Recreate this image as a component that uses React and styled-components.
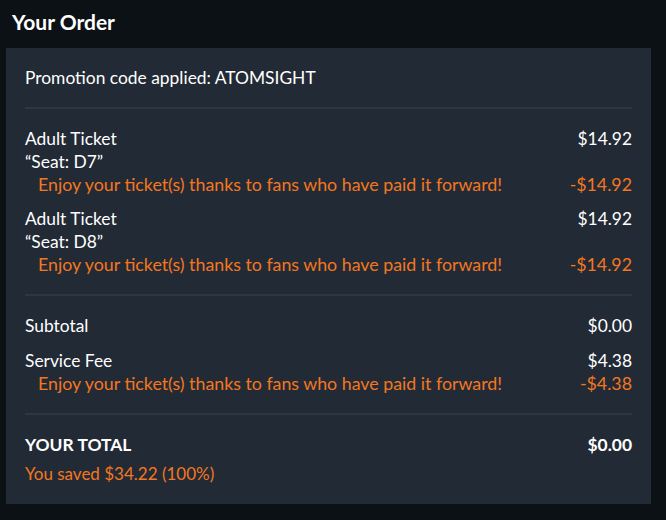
import React from "react";
import styled, { createGlobalStyle } from "styled-components";

const GlobalStyle = createGlobalStyle`
  body {
    margin: 0;
    background: #0c1116;
    font-family: "Lato", "Noto Sans", sans-serif;
    color: #fff;
  }
`;

const Page = styled.div`
  width: 666px;
  height: 520px;
  box-sizing: border-box;
  padding: 0 15px 0 6px;
`;

const Title = styled.h2`
  margin: 0;
  padding: 10px 6px 0;
  height: 48px;
  box-sizing: border-box;
  font-size: 21px;
  font-weight: 700;
  line-height: 24px;
`;

const Panel = styled.div`
  background: #222a35;
  padding: 0 19px;
`;

const Section = styled.div`
  padding: 18px 0 18px;
  display: flex;
  flex-direction: column;
  gap: ${(p) => p.$gap || 0}px;
  & + & {
    border-top: 2px solid #2b3746;
  }
  &:last-child {
    padding-bottom: 19px;
  }
`;

const Line = styled.div`
  display: flex;
  justify-content: space-between;
  font-size: 17.4px;
  line-height: 23px;
  font-weight: ${(p) => (p.$bold ? 700 : 400)};
`;

const Discount = styled(Line)`
  color: #f47720;
  font-size: ${(p) => (p.$indent ? 17.8 : 17)}px;
  padding-left: ${(p) => (p.$indent ? 13 : 0)}px;
`;

const Item = styled.div``;

const perk = "Enjoy your ticket(s) thanks to fans who have paid it forward!";

const items = [
  { name: "Adult Ticket", seat: "D7", price: "$14.92" },
  { name: "Adult Ticket", seat: "D8", price: "$14.92" },
];

export default function App() {
  return (
    <Page>
      <GlobalStyle />
      <Title>Your Order</Title>
      <Panel>
        <Section>
          <Line>Promotion code applied: ATOMSIGHT</Line>
        </Section>
        <Section $gap={11}>
          {items.map((it) => (
            <Item key={it.seat}>
              <Line>
                <span>{it.name}</span>
                <span>{it.price}</span>
              </Line>
              <Line>“Seat: {it.seat}”</Line>
              <Discount $indent>
                <span>{perk}</span>
                <span>-{it.price}</span>
              </Discount>
            </Item>
          ))}
        </Section>
        <Section $gap={12}>
          <Line>
            <span>Subtotal</span>
            <span>$0.00</span>
          </Line>
          <Item>
            <Line>
              <span>Service Fee</span>
              <span>$4.38</span>
            </Line>
            <Discount $indent>
              <span>{perk}</span>
              <span>-$4.38</span>
            </Discount>
          </Item>
        </Section>
        <Section $gap={6}>
          <Line $bold>
            <span>YOUR TOTAL</span>
            <span>$0.00</span>
          </Line>
          <Discount>You saved $34.22 (100%)</Discount>
        </Section>
      </Panel>
    </Page>
  );
}
